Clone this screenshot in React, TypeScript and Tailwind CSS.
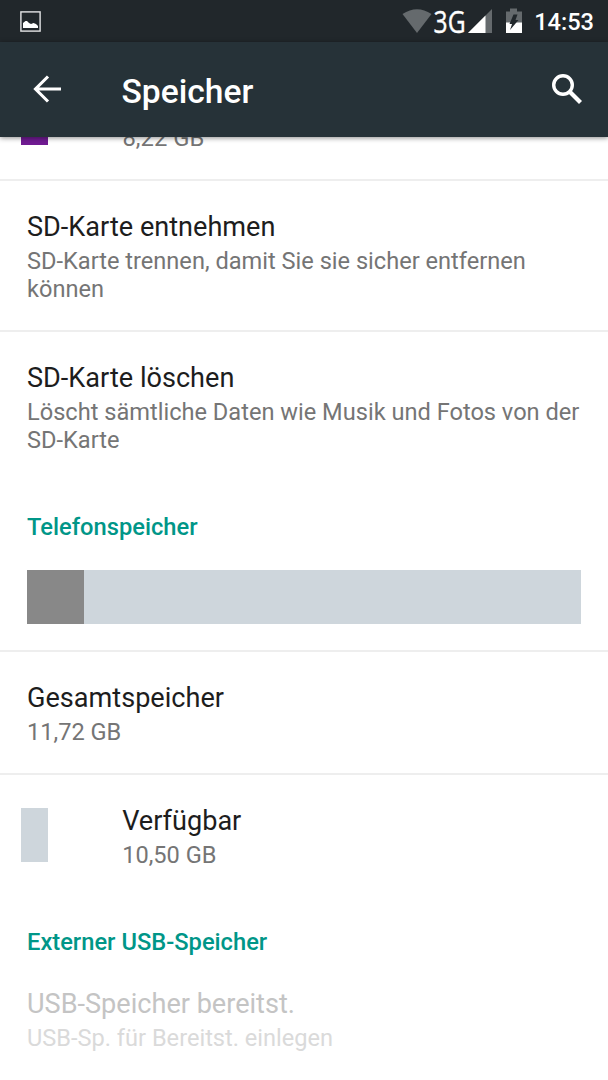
import type { ReactNode } from 'react';

function StatusBar() {
  return (
    <div className="flex h-[42px] items-center bg-[#21272b] text-white">
      <svg className="ml-5 block" width="21" height="21" viewBox="0 0 21 21">
        <rect x="0.9" y="0.9" width="19.2" height="19.2" fill="none" stroke="#e4e5e6" strokeWidth="1.4" />
        <path d="M3 17V12L5.500 10L7 10L9 12L11 13L13.500 12L16 13L18 15V17Z" fill="#fff" />
      </svg>
      <svg className="ml-auto block" width="124" height="42" viewBox="400 0 124 42">
        <path d="M403.500 14Q418 4.500 432.500 14L418 33Z" fill="#656a6d" />
        <path d="M493 9V33H469Z" fill="#656a6d" />
        <path d="M486.500 15.500V33H469Z" fill="#fff" />
        <path d="M511 8.500H518V11.500H523V33H507V11.500H511Z" fill="#656a6d" />
        <path d="M507 22.500H523V33H507Z" fill="#fff" />
        <path d="M514.500 14.500H518.500L516.500 20H519.500L511 30L513 24H510.500Z" fill="#21272b" />
        <text x="434.600" y="33" fill="#fff" stroke="#fff" strokeWidth="0.4" fontFamily="Open Sans" fontSize="31" textLength="32" lengthAdjust="spacingAndGlyphs">3G</text>
      </svg>
      <span className="mt-[2px] mr-[14px] ml-[11px] text-[23.6px] leading-[42px] font-medium">14:53</span>
    </div>
  );
}

function Toolbar() {
  return (
    <header className="relative z-10 flex h-[94.500px] items-center bg-[#263238] text-white shadow-[0_1px_5px_rgba(0,0,0,0.45)]">
      <svg className="ml-[33px] block" width="29" height="28" viewBox="0 0 29 28">
        <path d="M15 1.500L2.500 14L15 26.500M2.500 14H28" fill="none" stroke="#fff" strokeWidth="3.100" />
      </svg>
      <h1 className="mt-[6px] ml-[59.500px] text-[33.600px] leading-[40px] font-medium">Speicher</h1>
      <svg className="mr-[25px] ml-auto block" width="32" height="32" viewBox="0 0 32 32">
        <circle cx="12" cy="12" r="9.300" fill="none" stroke="#fff" strokeWidth="3.400" />
        <path d="M18.500 18.500L29.500 29.500" stroke="#fff" strokeWidth="4.200" />
      </svg>
    </header>
  );
}

function Entry({ title, disabled, children }: { title: string; disabled?: boolean; children: ReactNode }) {
  return (
    <div className={disabled ? 'text-[#c4c4c4]' : 'text-[#1d1d1d]'}>
      <h2 className="mb-1 text-[27.100px] leading-[32px]">{title}</h2>
      <p className={disabled ? 'text-[23.6px] leading-[28px] text-[#dadada]' : 'text-[23.6px] leading-[28px] text-[#757575]'}>
        {children}
      </p>
    </div>
  );
}

function SectionTitle({ children }: { children: ReactNode }) {
  return <h3 className="px-[27px] text-[23.700px] leading-[28px] font-medium text-[#009688]">{children}</h3>;
}

export default function App() {
  return (
    <div className="flex h-[1080px] w-[608px] flex-col overflow-hidden bg-white font-['Roboto',sans-serif]">
      <StatusBar />
      <Toolbar />
      <main className="flex flex-1 flex-col overflow-hidden">
        <section className="flex h-[44.500px] shrink-0 items-start border-b-2 border-[#eeeeee] pl-[21px]">
          <div className="h-[8.500px] w-[27px] bg-[#701b92]" />
          <p className="-mt-[12.500px] ml-[74.500px] text-[23.800px] leading-[28px] text-[#757575]">8,22 GB</p>
        </section>
        <section className="h-[151px] shrink-0 border-b-2 border-[#eeeeee] px-[27px] pt-[29.800px]">
          <Entry title="SD-Karte entnehmen">SD-Karte trennen, damit Sie sie sicher entfernen können</Entry>
        </section>
        <section className="h-[181px] shrink-0 px-[27px] pt-[29.800px]">
          <Entry title="SD-Karte löschen">
            Löscht sämtliche Daten wie Musik und Fotos von der SD-Karte
          </Entry>
        </section>
        <section className="h-[139px] shrink-0 border-b-2 border-[#eeeeee]">
          <SectionTitle>Telefonspeicher</SectionTitle>
          <div className="mx-[27px] mt-[28.600px] flex h-[54px] bg-[#ced6dc]">
            <div className="w-[57.300px] bg-[#888888]" />
          </div>
        </section>
        <section className="h-[123px] shrink-0 border-b-2 border-[#eeeeee] px-[27px] pt-[30px]">
          <Entry title="Gesamtspeicher">11,72 GB</Entry>
        </section>
        <section className="flex h-[153px] shrink-0 items-start pt-[30px] pl-[21px]">
          <div className="mt-[3px] mr-[74.200px] h-[54px] w-[27px] bg-[#ced6dc]" />
          <Entry title="Verfügbar">10,50 GB</Entry>
        </section>
        <SectionTitle>Externer USB-Speicher</SectionTitle>
        <section className="px-[27px] pt-[32px]">
          <Entry title="USB-Speicher bereitst." disabled>
            USB-Sp. für Bereitst. einlegen
          </Entry>
        </section>
      </main>
    </div>
  );
}
